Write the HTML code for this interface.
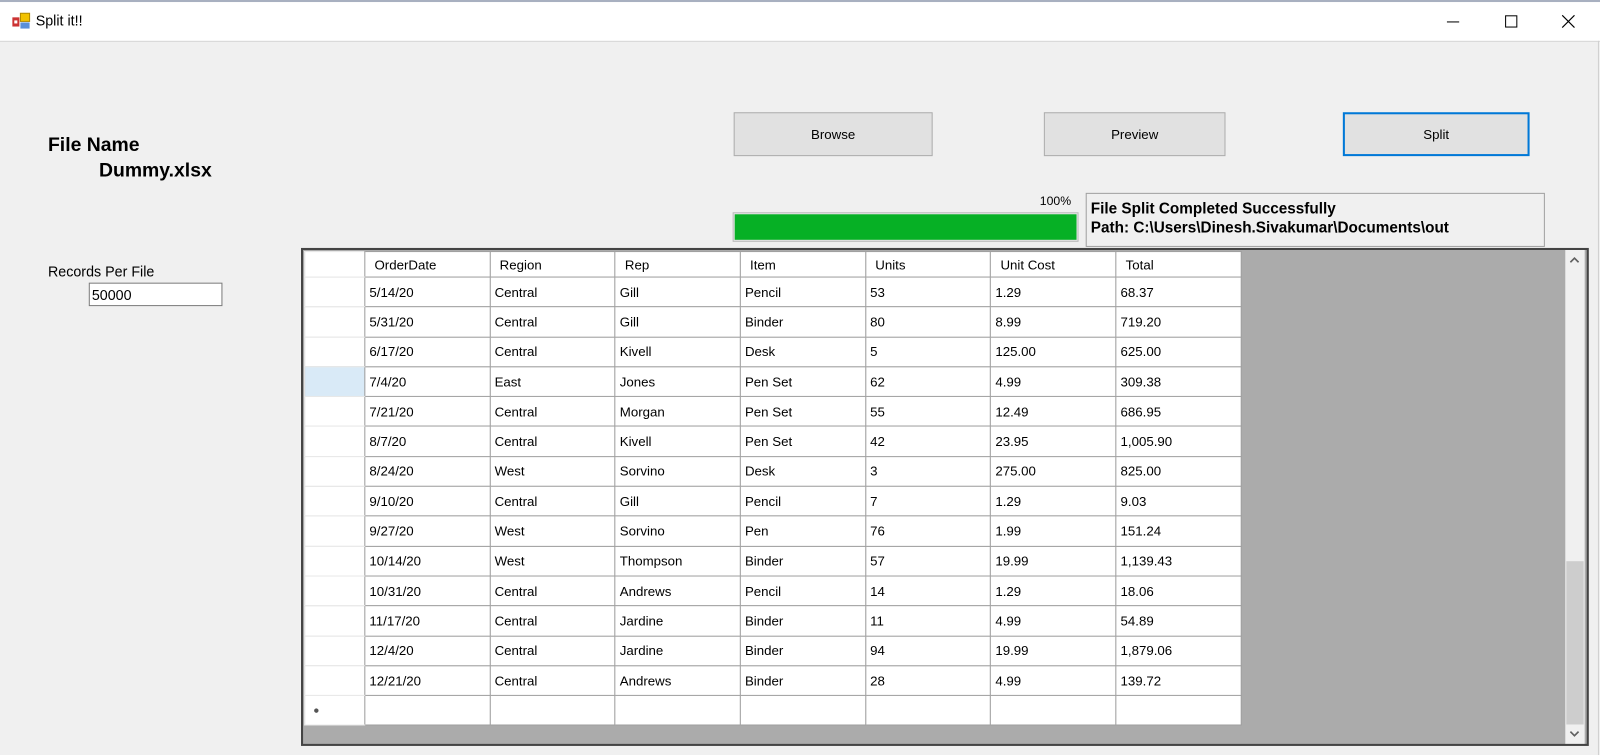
<!DOCTYPE html>
<html><head><style>
body{margin:0;width:1600px;height:749px;background:#f0f0f0;font-family:"Liberation Sans",sans-serif;position:relative;overflow:hidden;color:#000}
#w{position:absolute;left:0;top:0;width:1568px;height:734px;transform:scale(1.0204);transform-origin:0 0}
.a{position:absolute}
.btn{position:absolute;background:#e1e1e1;border:1px solid #adadad;box-sizing:border-box;font-size:13px;text-align:center}
table{border-collapse:collapse;font-size:13px;table-layout:fixed}
td{border:1px solid #a0a0a0;height:29.3px;width:122.7px;padding:0 0 0 4px;box-sizing:border-box;background:#fff;white-space:nowrap}
td.h{width:59px;border-color:#e8e8e8 #a0a0a0 #e8e8e8 #e8e8e8;}
tr.hd td{height:25px;padding-left:9px}
</style></head><body><div id="w">
<div class="a" style="left:0;top:0;width:1568px;height:40px;background:#fff;border-bottom:1px solid #d4d4d4"></div>
<div class="a" style="left:0;top:0;width:1568px;height:2px;background:#a8b0c0"></div>
<svg class="a" style="left:12px;top:12px" width="18" height="18"><rect x="0" y="5" width="7" height="9" fill="#c33"/><rect x="2" y="8" width="3" height="3" fill="#fff"/><rect x="8" y="1" width="9" height="8" fill="#f2c200" stroke="#b08800"/><rect x="8" y="10" width="9" height="6" fill="#5a8fd8"/></svg>
<div class="a" style="left:35px;top:12px;font-size:14px">Split it!!</div>
<div class="a" style="left:1418px;top:21px;width:12px;height:1px;background:#000"></div>
<div class="a" style="left:1475px;top:15px;width:10px;height:10px;border:1px solid #000"></div>
<svg class="a" style="left:1530px;top:14px" width="14" height="14"><path d="M1 1L13 13M13 1L1 13" stroke="#000" stroke-width="1.1"/></svg>
<div class="a" style="left:1566px;top:40px;width:1px;height:700px;background:#d0d0d0"></div>

<div class="a" style="left:47px;top:132px;font-size:19px;font-weight:bold">File Name</div>
<div class="a" style="left:97px;top:157px;font-size:19px;font-weight:bold">Dummy.xlsx</div>
<div class="a" style="left:47px;top:258px;font-size:14px">Records Per File</div>
<div class="a" style="left:87px;top:277px;width:131px;height:23px;background:#fff;border:1px solid #7a7a7a;box-sizing:border-box;font-size:14px;padding:3px 0 0 2px">50000</div>

<div class="btn" style="left:719px;top:110px;width:195px;height:43px;line-height:41px">Browse</div>
<div class="btn" style="left:1023px;top:110px;width:178px;height:43px;line-height:41px">Preview</div>
<div class="btn" style="left:1316px;top:110px;width:183px;height:43px;line-height:39px;border:2px solid #0078d7">Split</div>

<div class="a" style="left:1019px;top:190px;font-size:12px">100%</div>
<div class="a" style="left:718px;top:208px;width:339px;height:29px;background:#e6e6e6;border:1px solid #bcbcbc;box-sizing:border-box"><div style="margin:1px;height:25px;background:#06b025"></div></div>
<div class="a" style="left:1064px;top:189px;width:450px;height:53px;border:1px solid #a0a0a0;box-sizing:border-box;font-size:15px;font-weight:bold;padding:5px 0 0 4px;line-height:19px">File Split Completed Successfully<br>Path: C:\Users\Dinesh.Sivakumar\Documents\out</div>

<div class="a" style="left:295px;top:243px;width:1262px;height:488px;border:2px solid #444;box-sizing:border-box;background:#ababab;overflow:hidden">
<table style="position:absolute;left:1px;top:1px">
<colgroup><col style="width:59px"><col style="width:122.7px"><col style="width:122.7px"><col style="width:122.7px"><col style="width:122.7px"><col style="width:122.7px"><col style="width:122.7px"><col style="width:122.7px"></colgroup>
<tr class="hd"><td class="h"></td><td>OrderDate</td><td>Region</td><td>Rep</td><td>Item</td><td>Units</td><td>Unit Cost</td><td>Total</td></tr>
<tr><td class="h"></td><td>5/14/20</td><td>Central</td><td>Gill</td><td>Pencil</td><td>53</td><td>1.29</td><td>68.37</td></tr>
<tr><td class="h"></td><td>5/31/20</td><td>Central</td><td>Gill</td><td>Binder</td><td>80</td><td>8.99</td><td>719.20</td></tr>
<tr><td class="h"></td><td>6/17/20</td><td>Central</td><td>Kivell</td><td>Desk</td><td>5</td><td>125.00</td><td>625.00</td></tr>
<tr><td class="h" style="background:#d9eaf7"></td><td>7/4/20</td><td>East</td><td>Jones</td><td>Pen Set</td><td>62</td><td>4.99</td><td>309.38</td></tr>
<tr><td class="h"></td><td>7/21/20</td><td>Central</td><td>Morgan</td><td>Pen Set</td><td>55</td><td>12.49</td><td>686.95</td></tr>
<tr><td class="h"></td><td>8/7/20</td><td>Central</td><td>Kivell</td><td>Pen Set</td><td>42</td><td>23.95</td><td>1,005.90</td></tr>
<tr><td class="h"></td><td>8/24/20</td><td>West</td><td>Sorvino</td><td>Desk</td><td>3</td><td>275.00</td><td>825.00</td></tr>
<tr><td class="h"></td><td>9/10/20</td><td>Central</td><td>Gill</td><td>Pencil</td><td>7</td><td>1.29</td><td>9.03</td></tr>
<tr><td class="h"></td><td>9/27/20</td><td>West</td><td>Sorvino</td><td>Pen</td><td>76</td><td>1.99</td><td>151.24</td></tr>
<tr><td class="h"></td><td>10/14/20</td><td>West</td><td>Thompson</td><td>Binder</td><td>57</td><td>19.99</td><td>1,139.43</td></tr>
<tr><td class="h"></td><td>10/31/20</td><td>Central</td><td>Andrews</td><td>Pencil</td><td>14</td><td>1.29</td><td>18.06</td></tr>
<tr><td class="h"></td><td>11/17/20</td><td>Central</td><td>Jardine</td><td>Binder</td><td>11</td><td>4.99</td><td>54.89</td></tr>
<tr><td class="h"></td><td>12/4/20</td><td>Central</td><td>Jardine</td><td>Binder</td><td>94</td><td>19.99</td><td>1,879.06</td></tr>
<tr><td class="h"></td><td>12/21/20</td><td>Central</td><td>Andrews</td><td>Binder</td><td>28</td><td>4.99</td><td>139.72</td></tr>
<tr><td class="h" style="font-size:10px;padding-left:8px;color:#555">&#9679;</td><td></td><td></td><td></td><td></td><td></td><td></td><td></td></tr>
</table>
<div class="a" style="left:1237px;top:0;width:19px;height:484px;background:#f0f0f0">
<svg class="a" style="left:4px;top:6px" width="10" height="8"><path d="M1 6L5 2L9 6" stroke="#606060" stroke-width="1.6" fill="none"/></svg>
<div class="a" style="left:1px;top:305px;width:17px;height:160px;background:#cdcdcd"></div>
<svg class="a" style="left:4px;top:470px" width="10" height="8"><path d="M1 2L5 6L9 2" stroke="#606060" stroke-width="1.6" fill="none"/></svg>
</div>
</div>
</div></body></html>
